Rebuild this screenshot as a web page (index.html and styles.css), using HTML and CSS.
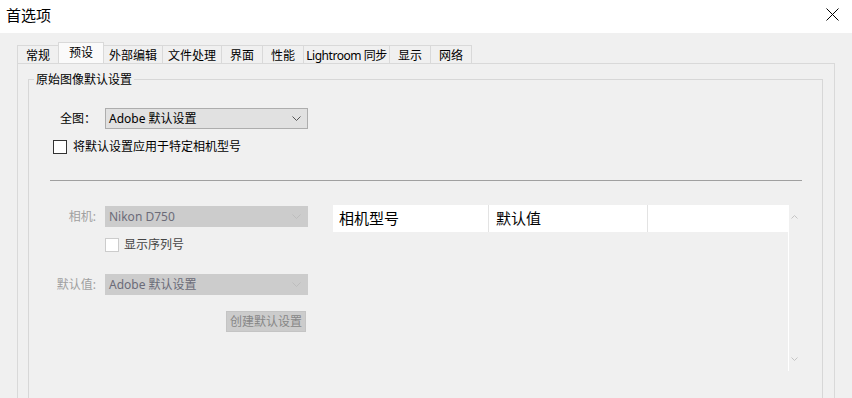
FILE: index.html
```html
<!DOCTYPE html>
<html lang="zh-CN">
<head>
  <meta charset="UTF-8">
  <title>首选项</title>
  <link rel="stylesheet" href="styles.css">
</head>
<body>

  <header class="titlebar">
    <span class="title">首选项</span>
    <svg class="close" viewBox="0 0 13 13" width="13" height="13">
      <path d="M0.5 0.5 L12.5 12.5 M12.5 0.5 L0.5 12.5" stroke="#000" stroke-width="1" fill="none"/>
    </svg>
  </header>

  <div class="main">
    <nav class="tabs">
      <div class="tab">常规</div>
      <div class="tab active">预设</div>
      <div class="tab">外部编辑</div>
      <div class="tab">文件处理</div>
      <div class="tab">界面</div>
      <div class="tab">性能</div>
      <div class="tab tab-sync">Lightroom 同步</div>
      <div class="tab">显示</div>
      <div class="tab">网络</div>
    </nav>

    <div class="panel">
      <fieldset class="group">
        <legend>原始图像默认设置</legend>
        <div class="group-body">

          <div class="form-row">
            <span class="field-label">全图：</span>
            <div class="select">
              <span>Adobe 默认设置</span>
              <svg class="chevron" viewBox="0 0 9 5" width="9" height="5">
                <path d="M0.5 0.5 L4.5 4.5 L8.5 0.5" stroke="#555" fill="none"/>
              </svg>
            </div>
          </div>

          <label class="check-row">
            <span class="box"></span>
            <span>将默认设置应用于特定相机型号</span>
          </label>

          <div class="divider"></div>

          <div class="camera-area">
            <div class="camera-form">
              <div class="form-row first disabled">
                <span class="field-label">相机:</span>
                <div class="select">
                  <span>Nikon D750</span>
                  <svg class="chevron" viewBox="0 0 9 5" width="9" height="5">
                    <path d="M0.5 0.5 L4.5 4.5 L8.5 0.5" stroke="#bdbdbd" fill="none"/>
                  </svg>
                </div>
              </div>

              <label class="check-row serial disabled">
                <span class="box"></span>
                <span>显示序列号</span>
              </label>

              <div class="form-row default-row disabled">
                <span class="field-label">默认值:</span>
                <div class="select">
                  <span>Adobe 默认设置</span>
                  <svg class="chevron" viewBox="0 0 9 5" width="9" height="5">
                    <path d="M0.5 0.5 L4.5 4.5 L8.5 0.5" stroke="#bdbdbd" fill="none"/>
                  </svg>
                </div>
              </div>

              <div class="button-row">
                <button class="btn" disabled>创建默认设置</button>
              </div>
            </div>

            <div class="list">
              <div class="list-main">
                <div class="list-header">
                  <div class="col col-model">相机型号</div>
                  <div class="col col-default">默认值</div>
                  <div class="col col-rest"></div>
                </div>
              </div>
              <div class="scrollbar">
                <svg viewBox="0 0 7 4" width="7" height="4">
                  <path d="M0.5 3.5 L3.5 0.5 L6.5 3.5" stroke="#c4c4c4" fill="none"/>
                </svg>
                <svg viewBox="0 0 7 4" width="7" height="4">
                  <path d="M0.5 0.5 L3.5 3.5 L6.5 0.5" stroke="#c4c4c4" fill="none"/>
                </svg>
              </div>
            </div>
          </div>

        </div>
      </fieldset>
    </div>
  </div>

</body>
</html>
```

FILE: styles.css
```css
* {
  box-sizing: border-box;
}

html, body {
  height: 398px;
  overflow: hidden;
}

body {
  margin: 0;
  width: 852px;
  background-color: #f0f0f0;
  font-family: "Noto Sans", "Noto Sans CJK SC", sans-serif;
  font-size: 12px;
  color: #000;
}

/* window title */
.titlebar {
  height: 33px;
  background-color: #ffffff;
  display: flex;
  justify-content: space-between;
  align-items: flex-start;
  padding: 5px 13px 0 6px;
}

.title {
  font-size: 15px;
  line-height: 20px;
}

.close {
  margin-top: 3px;
}

.main {
  padding: 9px 17px 0 17px;
}

/* tab strip */
.tabs {
  display: flex;
  align-items: flex-end;
  height: 21px;
}

.tab {
  height: 18px;
  min-width: 42px;
  padding: 2px 5px 0;
  margin-right: -1px;
  border: 1px solid #d9d9d9;
  border-bottom: none;
  line-height: 16px;
  text-align: center;
  white-space: nowrap;
  background-color: #f0f0f0;
}

.tab.active {
  height: 21px;
  min-width: 46px;
  background-color: #fafafa;
  position: relative;
  z-index: 1;
}

.tab-sync {
  width: 87px;
  padding: 2px 2px 0;
  letter-spacing: -0.45px;
}

.panel {
  height: 335px;
  border: 1px solid #d9d9d9;
  border-bottom: none;
  padding: 6px 11px 0 10px;
  background-color: #f0f0f0;
}

/* group box */
.group {
  margin: 0;
  padding: 0;
  min-width: 0;
  height: 328px;
  border: 1px solid #d7d7d7;
  border-bottom: none;
}

.group legend {
  margin-left: 5px;
  padding: 2px 2px 0;
  line-height: 16px;
  font-size: 12px;
}

.group-body {
  padding: 20px 20px 0 21px;
}

.form-row {
  display: grid;
  grid-template-columns: 46px 203px;
  column-gap: 9px;
  align-items: center;
  height: 21px;
}

.field-label {
  text-align: right;
  line-height: 16px;
  white-space: nowrap;
}

.select {
  height: 21px;
  border: 1px solid #adadad;
  background-color: #e1e1e1;
  display: flex;
  justify-content: space-between;
  align-items: center;
  padding: 0 6px 0 3px;
  line-height: 19px;
  white-space: nowrap;
}

.check-row {
  display: flex;
  align-items: center;
  gap: 6px;
  height: 15px;
  margin-top: 10px;
  padding-left: 3px;
  line-height: 15px;
}

.box {
  width: 14px;
  height: 14px;
  border: 1px solid #333;
  background-color: #ffffff;
}

.divider {
  margin-top: 26px;
  height: 1px;
  background-color: #a0a0a0;
}

/* camera specific area */
.camera-area {
  display: flex;
  gap: 25px;
  margin-top: 24px;
}

.camera-form {
  width: 258px;
  flex-shrink: 0;
}

.form-row.first {
  margin-top: 1px;
}

.disabled .field-label {
  color: #a0a0a0;
}

.disabled .select {
  border-color: #cccccc;
  background-color: #cccccc;
  color: #6b6b78;
}

.check-row.serial {
  padding-left: 55px;
  gap: 5px;
  color: #444;
}

.disabled .box {
  border-color: #cccccc;
}

.default-row {
  margin-top: 22px;
}

.button-row {
  display: flex;
  justify-content: flex-end;
  margin-top: 16px;
  padding-right: 2px;
}

.btn {
  width: 80px;
  height: 21px;
  padding: 0;
  border: 1px solid #c4c4c4;
  background-color: #cccccc;
  color: #878787;
  font-family: inherit;
  font-size: 12px;
  line-height: 19px;
}

/* camera list */
.list {
  display: flex;
  width: 467px;
  height: 166px;
}

.list-main {
  width: 456px;
  border-right: 1px solid #ffffff;
}

.list-header {
  display: flex;
  height: 27px;
  background-color: #ffffff;
  font-size: 15px;
  line-height: 27px;
}

.col {
  border-right: 1px solid #e3e3e3;
}

.col-model {
  width: 156px;
  padding-left: 6px;
}

.col-default {
  width: 159px;
  padding-left: 7px;
}

.col-rest {
  flex: 1;
  border-right: none;
}

.scrollbar {
  width: 11px;
  display: flex;
  flex-direction: column;
  justify-content: space-between;
  align-items: center;
  padding: 10px 0 10px;
}
```
